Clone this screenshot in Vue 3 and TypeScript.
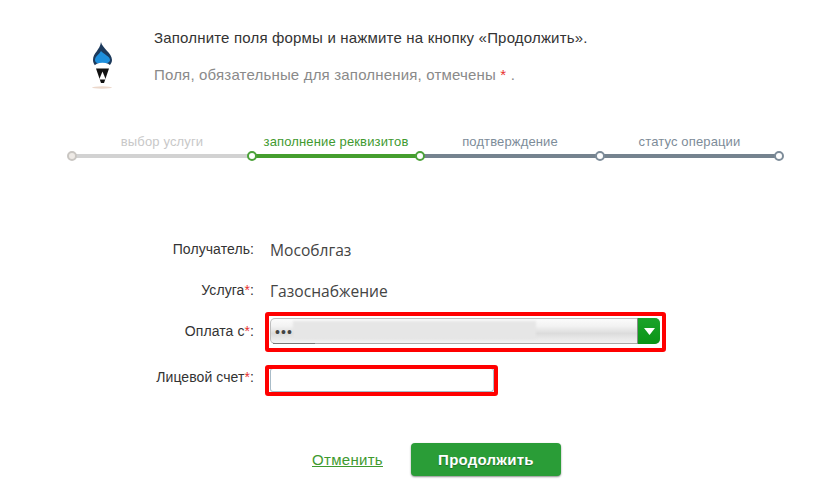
<script setup lang="ts">
interface Step { label: string; state: string }
const steps: Step[] = [
  { label: 'выбор услуги', state: 'done' },
  { label: 'заполнение реквизитов', state: 'active' },
  { label: 'подтверждение', state: 'todo' },
  { label: 'статус операции', state: 'todo' },
]
</script>

<template>
  <div class="page">
    <header class="intro">
      <svg class="logo" width="34" height="50" viewBox="0 0 34 50">
        <ellipse cx="17" cy="47.5" rx="10" ry="1.2" fill="#ecd8cb" />
        <path d="M16 2 C17 8 27 13 27 20 C27 25 22 28 17 28 C12 28 8 25 8 20 C8 13 15 10 16 2 Z" fill="#1c3a5c" />
        <path d="M16 11 C18 14 25 16 25 20 C25 22 22 24 17 24 C12 24 10 22 10 20 C10 16 14 15 16 11 Z" fill="#1e8fdc" />
        <ellipse cx="17.5" cy="26.5" rx="8" ry="3.8" fill="#fff" />
        <path d="M11 28.5 L24 28.5 L19 43 L16 43 Z" fill="#111" />
        <path d="M17.5 31.5 L20.8 39.5 L14.2 39.5 Z" fill="#fff" />
      </svg>
      <div class="intro-text">
        <p class="lead">Заполните поля формы и нажмите на кнопку «Продолжить».</p>
        <p class="note">Поля, обязательные для заполнения, отмечены <span class="req">*</span> .</p>
      </div>
    </header>

    <ol class="steps">
      <li v-for="s in steps" :key="s.label" class="step" :class="s.state">
        <span class="step-label">{{ s.label }}</span>
        <span class="step-line"></span>
      </li>
      <li class="end-dot"></li>
    </ol>

    <form class="form" @submit.prevent>
      <div class="row row-first">
        <span class="label">Получатель:</span>
        <span class="value">Мособлгаз</span>
      </div>
      <div class="row row-second">
        <span class="label">Услуга<span class="req">*</span>:</span>
        <span class="value">Газоснабжение</span>
      </div>
      <div class="row row-select">
        <span class="label">Оплата с<span class="req">*</span>:</span>
        <div class="field select">
          <span class="dots">•••</span>
          <span class="smear"></span>
          <span class="arrow"><svg width="11" height="7" viewBox="0 0 11 7"><path d="M0 0 H11 L5.5 7 Z" fill="#fff" /></svg></span>
        </div>
      </div>
      <div class="row row-input">
        <label class="label" for="acc">Лицевой счет<span class="req">*</span>:</label>
        <div class="field input"><input id="acc" type="text" /></div>
      </div>
      <div class="actions">
        <a class="cancel" href="#">Отменить</a>
        <button class="submit" type="submit">Продолжить</button>
      </div>
    </form>
  </div>
</template>

<style>
html, body { margin: 0; background: #fff; }
</style>

<style scoped>
.page {
  width: 821px;
  height: 496px;
  overflow: hidden;
  box-sizing: border-box;
  font-family: "Liberation Sans", Arial, sans-serif;
  color: #333;
}
.intro {
  display: flex;
  padding: 29px 0 0 85px;
  height: 132px;
  box-sizing: border-box;
}
.logo { margin-top: 11px; flex: none; }
.intro-text { margin-left: 35px; }
.lead { margin: 0; font-size: 15px; line-height: 17px; letter-spacing: 0.18px; color: #333; }
.note { margin: 20px 0 0; font-size: 15px; line-height: 17px; letter-spacing: 0.18px; color: #8a8a8a; }
.req { color: #e8312f; }

.steps {
  list-style: none;
  display: flex;
  margin: 0;
  padding: 0 0 0 72px;
  height: 29px;
  position: relative;
}
.step { position: relative; display: flex; justify-content: center; font-size: 13px; line-height: 19px; letter-spacing: 0.14px; }
.step:nth-child(1) { width: 180px; }
.step:nth-child(2) { width: 168px; }
.step:nth-child(3) { width: 180px; }
.step:nth-child(4) { width: 179px; }
.step-line {
  position: absolute;
  left: 0; right: 0; top: 22px;
  height: 4px;
}
.step-line::before {
  content: "";
  position: absolute;
  left: -5px; top: -3px;
  width: 6px; height: 6px;
  border: 2px solid;
  border-radius: 50%;
  background: #fff;
  z-index: 1;
}
.done .step-label { color: #c8c8c8; }
.done .step-line { background: #d2d2d2; }
.done .step-line::before { border-color: #c9c6c2; background: #eeeae6; }
.active .step-label { color: #3f9a2f; }
.active .step-line { background: #459e2e; }
.active .step-line::before { border-color: #4ca23a; }
.todo .step-label { color: #7d8c99; }
.todo .step-line { background: #75838f; }
.todo .step-line::before { border-color: #7d8c99; }
.step:nth-child(3) .step-line::before { border-color: #4ca23a; }
.end-dot {
  position: relative;
  width: 6px; height: 6px;
  margin: 19px 0 0 -5px;
  border: 2px solid #7d8c99;
  border-radius: 50%;
  background: #fff;
}

.form { padding-top: 76px; }
.row {
  display: flex;
  align-items: center;
  height: 26px;
}
.row-first { margin-bottom: 15px; }
.row-second { margin-bottom: 14px; }
.row-select { margin-bottom: 24px; }
.row-input { height: 24px; }
.label {
  width: 254px;
  flex: none;
  text-align: right;
  font-size: 14px;
  letter-spacing: 0.08px;
  color: #333;
  position: relative;
  top: -1px;
}
.row-select .label { top: 0; }
.row-input .label { top: -3px; }
.value {
  margin-left: 16px;
  font-family: "Open Sans", "Noto Sans", sans-serif;
  font-size: 15.6px;
  color: #444;
}
.field { position: relative; margin-left: 16px; box-sizing: border-box; }
.field::after {
  content: "";
  position: absolute;
  border: 4px solid #ff0000;
  border-radius: 3px;
  pointer-events: none;
}
.select {
  width: 390px;
  height: 26px;
  border: 1px solid #bdbdbd;
  border-bottom-color: #a8a8a8;
  border-radius: 5px;
  background: linear-gradient(#fbfbfb 0%, #f2f2f2 30%, #dcdcdc 60%, #f3f3f3 100%);
  display: flex;
  align-items: center;
}
.select::before {
  content: "";
  position: absolute;
  left: 2px; bottom: -1px;
  width: 42px; height: 1px;
  background: #777;
}
.select::after { inset: -7px -7px -9px -6px; }
.dots {
  font-size: 14px;
  line-height: 14px;
  letter-spacing: 1.1px;
  color: #444;
  margin: 2px 0 0 4px;
  width: 18px;
  flex: none;
  white-space: nowrap;
}
.smear {
  display: block;
  width: 243px;
  height: 18px;
  margin-top: -2px;
  background: #e6e6e6;
  filter: blur(1px);
}
.arrow {
  position: absolute;
  top: -1px; right: -1px; bottom: -1px;
  width: 23px;
  background: linear-gradient(#1aa32a, #0a9416);
  border-left: 1px solid #8a8a8a;
  box-sizing: border-box;
  border-radius: 0 5px 5px 0;
  display: flex;
  align-items: center;
  justify-content: center;
}
.input {
  width: 224px;
  height: 24px;
  border: 1px solid #a9bcc8;
  border-top-color: #9fb3c0;
  border-radius: 3px;
  background: #fff;
}
.input::after { inset: -4px -5px -5px -6px; }
.input input {
  display: block;
  width: 100%;
  height: 100%;
  box-sizing: border-box;
  border: 0;
  padding: 0;
  outline: 0;
  background: transparent;
}

.actions {
  display: flex;
  align-items: center;
  margin-top: 51px;
  padding-left: 312px;
}
.cancel { color: #3f9a2f; font-size: 15px; letter-spacing: 0.3px; text-decoration: underline; }
.submit {
  margin-left: 28px;
  width: 150px;
  height: 33px;
  border: 0;
  border-radius: 4px;
  background: #2a9d37;
  box-shadow: 0 1px 2px rgba(0, 0, 0, 0.45);
  color: #fff;
  font-family: "Liberation Sans", Arial, sans-serif;
  font-size: 15px;
  font-weight: 700;
  letter-spacing: 0.25px;
  text-shadow: 0 1px 1px rgba(0, 0, 0, 0.3);
}
</style>
